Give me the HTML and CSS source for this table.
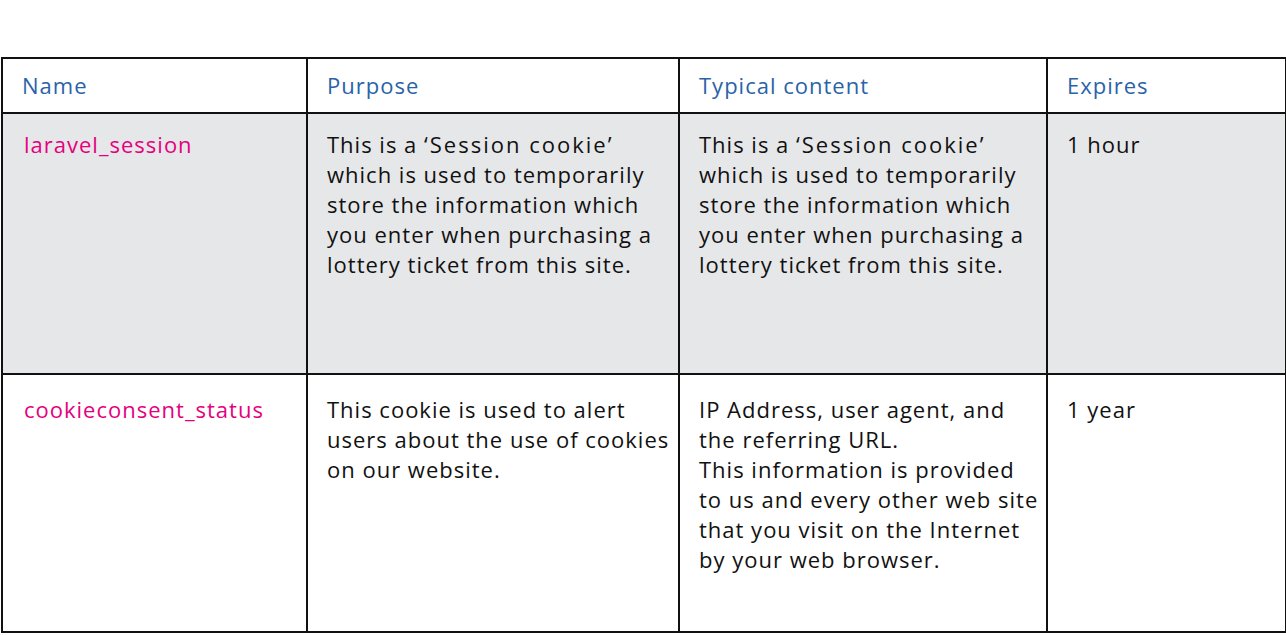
FILE: index.html
```html
<!DOCTYPE html>
<html lang="en">
<head>
<meta charset="utf-8">
<title>Cookies</title>
<link rel="stylesheet" href="styles.css">
</head>
<body>
<table class="cookie-table">
  <colgroup>
    <col class="c-name">
    <col class="c-purpose">
    <col class="c-content">
    <col class="c-expires">
  </colgroup>
  <thead>
    <tr class="head-row">
      <th>Name</th>
      <th>Purpose</th>
      <th>Typical content</th>
      <th>Expires</th>
    </tr>
  </thead>
  <tbody>
    <tr class="row-a">
      <td class="name">laravel_session</td>
      <td>This is a <span class="term">‘Session cookie’</span> which is used to temporarily store the information which you enter when purchasing a lottery ticket from this site.</td>
      <td>This is a <span class="term">‘Session cookie’</span> which is used to temporarily store the information which you enter when purchasing a lottery ticket from this site.</td>
      <td>1 hour</td>
    </tr>
    <tr class="row-b">
      <td class="name">cookieconsent_status</td>
      <td>This cookie is used to alert users about the use of cookies on our website.</td>
      <td>IP Address, user agent, and the referring URL.<br>This information is provided to us and every other web site that you visit on the Internet by your web browser.</td>
      <td>1 year</td>
    </tr>
  </tbody>
</table>
</body>
</html>
```

FILE: styles.css
```css
html, body {
  margin: 0;
  padding: 0;
  background: #ffffff;
}
body {
  padding: 57px 0 0 1px;
  font-family: "Open Sans", "Noto Sans", sans-serif;
  color: #111111;
}
.cookie-table {
  border-collapse: collapse;
  table-layout: fixed;
  width: 1284px;
}
.c-name { width: 305px; }
.c-purpose { width: 372px; }
.c-content { width: 368px; }
.c-expires { width: 239px; }
.cookie-table th,
.cookie-table td {
  border: 2px solid #111111;
  font-size: 22px;
  line-height: 30px;
  letter-spacing: 1px;
  text-align: left;
  vertical-align: top;
}
.cookie-table th {
  font-weight: 400;
  color: #2a63a8;
  height: 51px;
  padding: 0 0 2px 19px;
  vertical-align: middle;
}
.cookie-table td {
  padding: 15px 4px 0 19px;
}
.term {
  letter-spacing: 2px;
}
.row-a td {
  background: #e6e7e9;
  height: 244px;
}
.row-b td {
  padding-top: 19px;
  height: 237px;
}
.cookie-table td.name {
  color: #e5007e;
  padding-left: 21px;
}
```
